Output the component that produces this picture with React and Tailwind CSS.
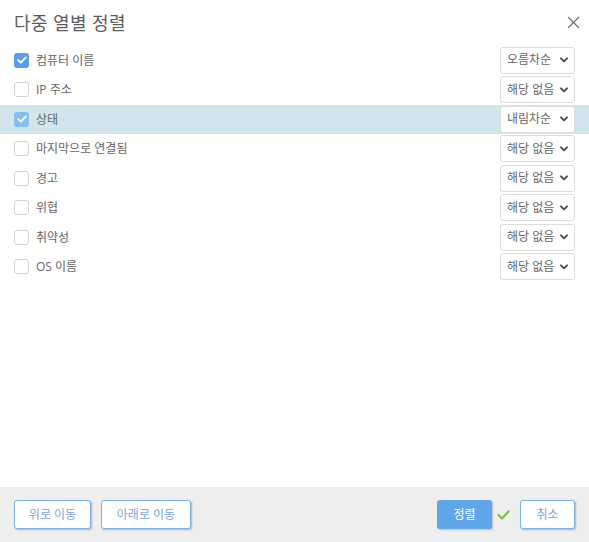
import React from "react";

const rows = [
  { label: "컴퓨터 이름", checked: true, order: "오름차순" },
  { label: "IP 주소", checked: false, order: "해당 없음" },
  { label: "상태", checked: true, order: "내림차순", active: true },
  { label: "마지막으로 연결됨", checked: false, order: "해당 없음" },
  { label: "경고", checked: false, order: "해당 없음" },
  { label: "위협", checked: false, order: "해당 없음" },
  { label: "취약성", checked: false, order: "해당 없음" },
  { label: "OS 이름", checked: false, order: "해당 없음" },
];

const font = { fontFamily: '"Open Sans", "Noto Sans CJK KR", sans-serif' };

const Checkbox = ({ checked, active }) => {
  if (!checked) {
    return (
      <span className="w-[15px] h-[15px] rounded-[3px] border border-[#d2d2d2] bg-white shrink-0" />
    );
  }
  return (
    <span
      className={
        "w-[15px] h-[15px] rounded-[3px] flex items-center justify-center shrink-0 " +
        (active ? "bg-[#84bff1]" : "bg-[#5b9fe2]")
      }
    >
      <svg width="10" height="8" viewBox="0 0 10 8" fill="none">
        <path d="M1.2 4.2 L3.8 6.6 L8.8 1.4" stroke="white" strokeWidth="1.8" strokeLinecap="round" strokeLinejoin="round" />
      </svg>
    </span>
  );
};

const Select = ({ value }) => (
  <div className="w-[75px] h-[27px] rounded-[3px] border border-[#dcdcdc] bg-white flex items-center justify-between pl-[6px] pr-[6px] shrink-0">
    <span className="text-[12px] text-[#666]">{value}</span>
    <svg width="8" height="6" viewBox="0 0 8 6" fill="none">
      <path d="M1 1.3 L4 4.3 L7 1.3" stroke="#4a4a4a" strokeWidth="1.9" strokeLinecap="round" strokeLinejoin="round" />
    </svg>
  </div>
);

const OutlineButton = ({ children, w }) => (
  <button
    className={
      "h-[29px] rounded-[3px] border border-[#7db2e8] bg-white text-[12px] text-[#7aa6dc] shadow-[1px_1px_2px_rgba(0,0,0,0.25)] " +
      w
    }
  >
    {children}
  </button>
);

export default function App() {
  return (
    <div className="w-[589px] h-[542px] bg-white flex flex-col" style={font}>
      {/* header */}
      <div className="h-[45.5px] flex items-center justify-between pl-[14px] pr-[9px] shrink-0">
        <h1 className="text-[18px] text-[#5c5c5c] tracking-[0.4px] pt-[1px]">다중 열별 정렬</h1>
        <svg width="13" height="13" viewBox="0 0 13 13" fill="none">
          <path d="M1 1 L12 12 M12 1 L1 12" stroke="#6b6b6b" strokeWidth="1.1" />
        </svg>
      </div>

      {/* rows */}
      <div className="flex flex-col">
        {rows.map((row, i) => (
          <div
            key={i}
            className={
              "h-[29.5px] flex items-center justify-between pl-[14px] pr-[14px] " +
              (row.active ? "bg-[#d3e4ec]" : "")
            }
          >
            <div className="flex items-center gap-[7px]">
              <Checkbox checked={row.checked} active={row.active} />
              <span className="text-[12px] text-[#666] pt-[1px]">{row.label}</span>
            </div>
            <Select value={row.order} />
          </div>
        ))}
      </div>

      <div className="flex-1" />

      {/* footer */}
      <div className="h-[55px] bg-[#eeeeee] flex items-start justify-between pt-[13px] px-[14px] shrink-0">
        <div className="flex gap-[10px]">
          <OutlineButton w="w-[77px]">위로 이동</OutlineButton>
          <OutlineButton w="w-[90px]">아래로 이동</OutlineButton>
        </div>
        <div className="flex items-center">
          <button className="w-[55px] h-[29px] rounded-[3px] bg-[#60a6e8] text-white text-[12px] shadow-[1px_1px_2px_rgba(0,0,0,0.2)]">
            정렬
          </button>
          <svg className="ml-[5px] mr-[10px]" width="13" height="10" viewBox="0 0 13 10" fill="none">
            <path d="M1.5 5 L5 8.5 L11.5 1.5" stroke="#7cc142" strokeWidth="2.2" strokeLinecap="round" strokeLinejoin="round" />
          </svg>
          <OutlineButton w="w-[55px]">취소</OutlineButton>
        </div>
      </div>
    </div>
  );
}
